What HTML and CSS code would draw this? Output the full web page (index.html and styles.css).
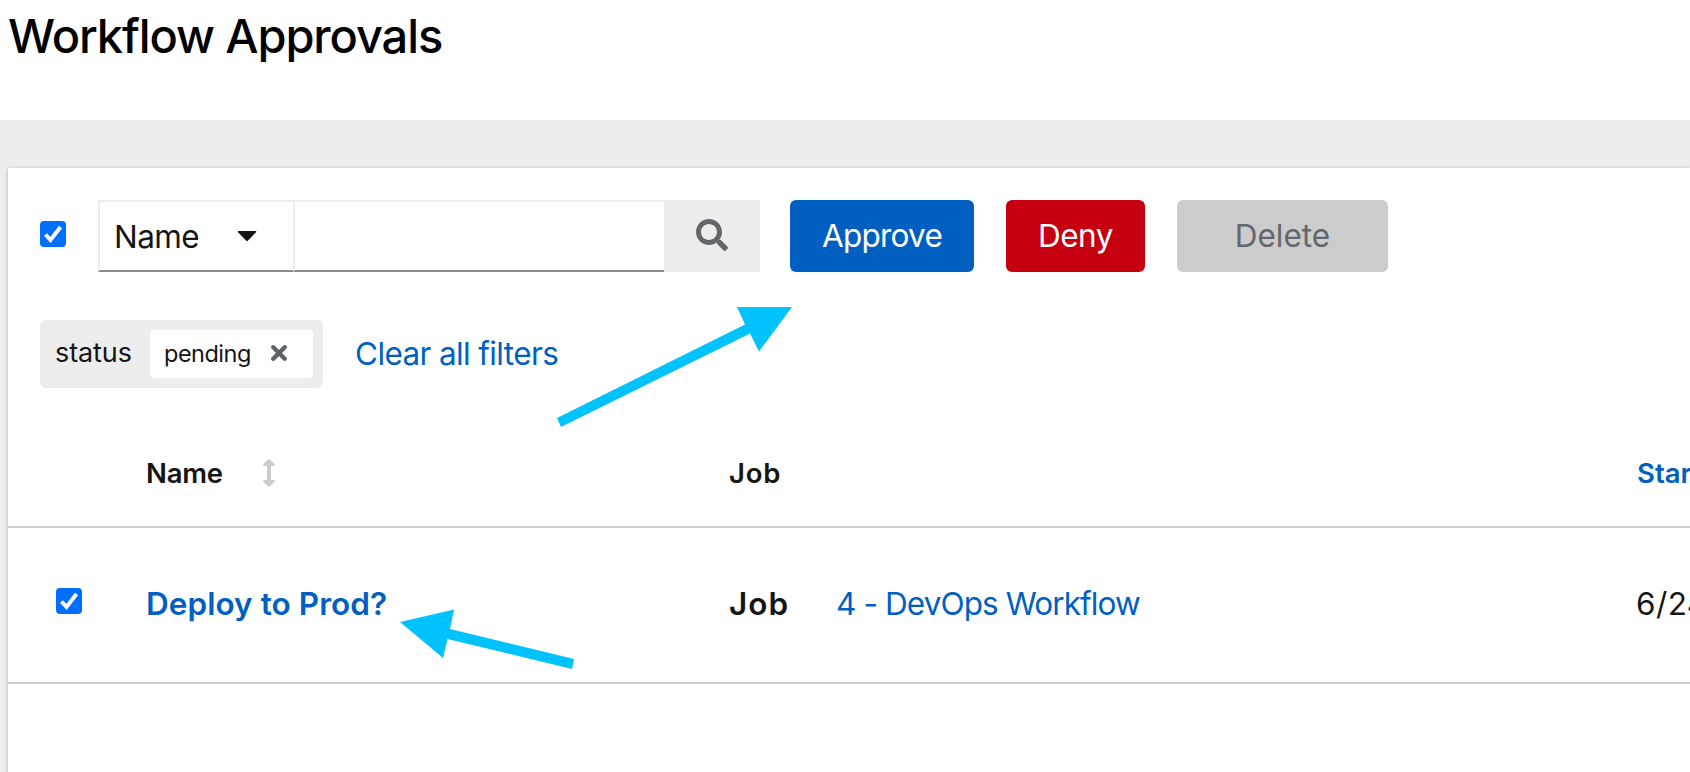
FILE: index.html
```
<!DOCTYPE html>
<html lang="en">
<head>
<meta charset="utf-8">
<title>Workflow Approvals</title>
<link rel="stylesheet" href="styles.css">
</head>
<body>
<header class="page-header"><h1 class="title">Workflow Approvals</h1></header>
<main class="content">
  <section class="card">
    <div class="toolbar">
      <span class="check"><svg viewBox="0 0 26 26"><path d="M5.5 13.5l5 5.500L20.500 6"/></svg></span>
      <div class="search">
        <div class="select"><span class="select-label">Name</span><svg class="caret" viewBox="0 0 20 12"><path d="M1.500 1h17Q20 1 19 2.300L11 10.500Q10 11.500 9 10.500L1 2.300Q0 1 1.500 1z"/></svg></div>
        <div class="field"></div>
        <div class="search-btn"><svg viewBox="0 0 512 512"><path d="M505 442.700L405.300 343c-4.500-4.500-10.600-7-17-7H372c27.600-35.300 44-79.700 44-128C416 93.100 322.900 0 208 0S0 93.100 0 208s93.100 208 208 208c48.300 0 92.700-16.400 128-44v16.300c0 6.400 2.500 12.500 7 17l99.700 99.700c9.400 9.400 24.600 9.400 33.900 0l28.300-28.300c9.400-9.400 9.400-24.600.1-34zM208 336c-70.700 0-128-57.200-128-128 0-70.700 57.200-128 128-128 70.700 0 128 57.200 128 128 0 70.700-57.200 128-128 128z"/></svg></div>
      </div>
      <div class="btn approve">Approve</div>
      <div class="btn deny">Deny</div>
      <div class="btn delete">Delete</div>
    </div>
    <div class="filters">
      <div class="chip-group">
        <span class="chip-label">status</span>
        <div class="chip"><span>pending</span><svg viewBox="0 0 16 16"><path d="M2.300 2.300l11.400 11.400M13.700 2.300L2.300 13.700"/></svg></div>
      </div>
      <a class="clear">Clear all filters</a>
    </div>
    <div class="row head">
      <div></div>
      <div class="name-head"><span>Name</span><svg viewBox="0 0 12 28"><path d="M5.200.5Q6 0 6.800.5L11.700 5.200Q12.300 7 11 7H8v14h3q1.300 0 .7 1.800L6.800 27.500Q6 28 5.200 27.500L.3 22.800Q-.3 21 1 21h3V7H1Q-.3 7 .3 5.200z"/></svg></div>
      <div class="job-head">Job</div>
      <div class="started">Started</div>
    </div>
    <div class="row item">
      <div class="cell-check"><span class="check"><svg viewBox="0 0 26 26"><path d="M5.500 13.500l5 5.500L20.500 6"/></svg></span></div>
      <div class="item-name">Deploy to Prod?</div>
      <div class="job"><b>Job</b><a>4 - DevOps Workflow</a></div>
      <div class="date">6/24/2021</div>
    </div>
  </section>
</main>
<svg class="arrows" viewBox="0 0 1690 772">
  <path d="M792 307L759 351.500 750 333.500 561 427 557 418 745 324.500 737 307z"/>
  <path d="M400 622L454 609.500 450 629 574 659 572 669 447.500 639 443 658z"/>
</svg>
</body>
</html>
```
FILE: styles.css
```
* { box-sizing: border-box; }
body { margin: 0; height: 772px; overflow: hidden; background: #ededed; color: #151515; font: 31.5px Inter, "Open Sans", sans-serif; white-space: nowrap; }
.page-header { height: 120px; background: #fff; padding-left: 8px; }
.title { margin: 0; font-size: 47px; font-weight: 550; line-height: 72px; letter-spacing: -1.1px; color: #000; }
.content { padding: 48px 0 0 8px; }
.card { height: 620px; padding-top: 32px; overflow: visible; background: #fff; box-shadow: 0 2px 4px rgba(3,3,3,.12), 0 0 4px rgba(3,3,3,.12); }
.toolbar { display: flex; height: 72px; padding-left: 32px; }
.check { display: block; flex: none; width: 26px; height: 26px; border-radius: 4px; background: #006fff; }
.toolbar .check { margin: 21px 32px 0 0; }
.check svg { display: block; width: 26px; height: 26px; fill: none; stroke: #fff; stroke-width: 4; }
.search { display: flex; width: 662px; margin-right: 30px; }
.select { display: flex; align-items: center; width: 195px; padding-left: 14px; border: 2px solid #ededed; border-bottom-color: #8a8d90; border-right: 0; }
.select-label { width: 123px; letter-spacing: -.6px; }
.caret { width: 20px; height: 12px; fill: #151515; }
.field { width: 371px; border: 2px solid #ededed; border-right: 0; border-bottom-color: #8a8d90; }
.search-btn { width: 96px; padding: 19px 32px; background: #ededed; }
.search-btn svg { display: block; width: 32px; height: 32px; fill: #63676b; }
.btn { height: 72px; line-height: 72px; border-radius: 6px; color: #fff; text-align: center; }
.approve { width: 184px; margin-right: 32px; background: #005fc1; letter-spacing: -.75px; }
.deny { width: 139px; margin-right: 32px; background: #c70011; letter-spacing: -.5px; }
.delete { width: 211px; background: #ccc; color: #63676b; }
.filters { display: flex; align-items: center; height: 68px; margin: 48px 0 0 32px; }
.chip-group { display: flex; align-items: center; width: 283px; height: 68px; padding-left: 15px; border-radius: 6px; background: #ededed; }
.chip-label { width: 95px; padding-bottom: 4px; font-size: 27px; letter-spacing: -.1px; }
.chip { display: flex; align-items: center; width: 163px; height: 48px; padding-left: 14px; border-radius: 4px; background: #fff; font-size: 23.5px; letter-spacing: -.5px; }
.chip span { width: 107px; padding-bottom: 1px; }
.chip svg { width: 16px; height: 16px; margin-top: -2px; fill: none; stroke: #5f6368; stroke-width: 4.4; stroke-linecap: round; }
.clear { margin-left: 32px; padding-bottom: 1px; color: #005fc1; letter-spacing: -.62px; }
.row { display: grid; grid-template-columns: 138px 582px 907px 1fr; align-items: center; border-bottom: 2px solid #ccc; }
.head { height: 108px; margin-top: 32px; font-size: 27.5px; font-weight: 600; }
.name-head { display: flex; align-items: center; }
.name-head span { width: 117px; letter-spacing: -.2px; }
.name-head svg { width: 12px; height: 28px; fill: #ccc; }
.job-head { padding-left: 1px; letter-spacing: .8px; }
.started { padding-left: 2px; color: #005fc1; }
.item { height: 156px; padding-bottom: 3px; }
.cell-check { padding: 0 0 5px 48px; }
.item-name { font-weight: 600; color: #005fc1; letter-spacing: .05px; }
.job { display: flex; padding-left: 1px; }
.job b { width: 107px; font-weight: 600; letter-spacing: 1px; }
.job a { color: #005fc1; letter-spacing: -.9px; }
.date { padding-left: 1px; letter-spacing: .4px; }
.arrows { position: absolute; inset: 0; width: 1690px; height: 772px; fill: #00c2fc; }
```
